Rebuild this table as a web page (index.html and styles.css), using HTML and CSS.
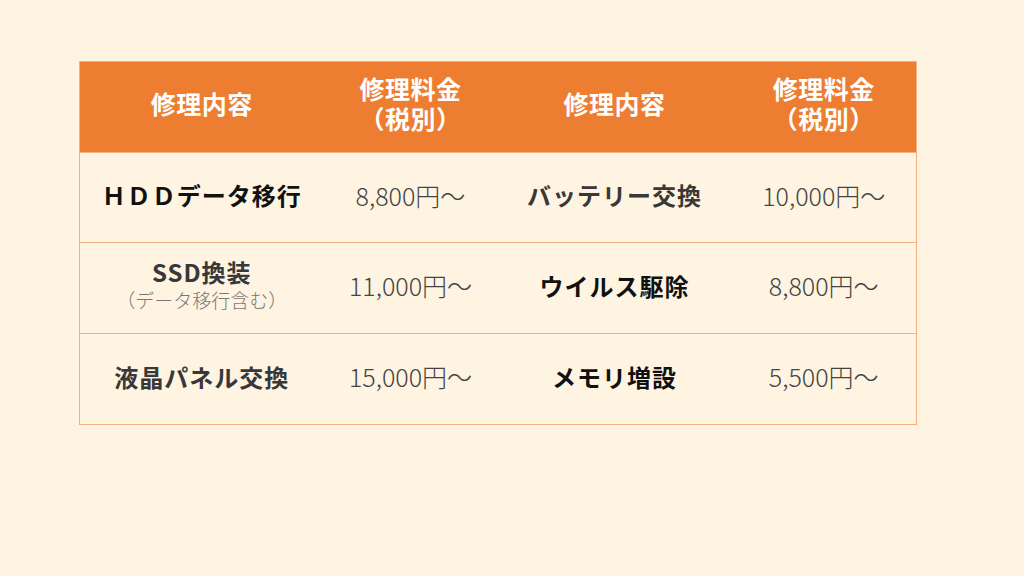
FILE: index.html
```html
<!DOCTYPE html>
<html lang="ja">
<head>
<meta charset="utf-8">
<title>修理料金表</title>
<link rel="stylesheet" href="styles.css">
</head>
<body>
<main class="page">
  <table class="price-table">
    <colgroup>
      <col class="c1"><col class="c2"><col class="c3"><col class="c4">
    </colgroup>
    <thead>
      <tr>
        <th>修理内容</th>
        <th>修理料金<br>（税別）</th>
        <th>修理内容</th>
        <th>修理料金<br>（税別）</th>
      </tr>
    </thead>
    <tbody>
      <tr>
        <td class="item dark">ＨＤＤデータ移行</td>
        <td class="price">8,800円～</td>
        <td class="item">バッテリー交換</td>
        <td class="price">10,000円～</td>
      </tr>
      <tr>
        <td class="item"><span class="main">SSD換装</span><span class="sub">（データ移行含む）</span></td>
        <td class="price">11,000円～</td>
        <td class="item dark">ウイルス駆除</td>
        <td class="price">8,800円～</td>
      </tr>
      <tr>
        <td class="item">液晶パネル交換</td>
        <td class="price">15,000円～</td>
        <td class="item dark">メモリ増設</td>
        <td class="price">5,500円～</td>
      </tr>
    </tbody>
  </table>
</main>
</body>
</html>
```
FILE: styles.css
```css
html, body {
  margin: 0;
  padding: 0;
  background: #fef4e1;
}
body {
  font-family: "Noto Sans CJK JP", "Noto Sans", sans-serif;
  width: 1024px;
  height: 576px;
  overflow: hidden;
}
.page {
  padding: 61px 0 0 79px;
}
.price-table {
  width: 837px;
  border-collapse: collapse;
  table-layout: fixed;
}
.c1 { width: 244px; }
.c2 { width: 174px; }
.c3 { width: 234px; }
.c4 { width: 185px; }
.price-table th {
  background: #ed7d31;
  color: #fff;
  font-weight: bold;
  font-size: 25px;
  letter-spacing: 0.5px;
  line-height: 30px;
  height: 82px;
  padding: 0 0 8px;
  text-align: center;
  vertical-align: middle;
  border-top: 1px solid #f4b183;
  border-bottom: 1px solid #f4b183;
}
.price-table th:first-child {
  border-left: 1px solid #f4b183;
}
.price-table th:last-child {
  border-right: 1px solid #f4b183;
}
.price-table td {
  height: 84px;
  padding: 0 0 6px;
  text-align: center;
  vertical-align: middle;
  border-bottom: 1px solid #f4b183;
}
.price-table tbody tr:first-child td {
  height: 83px;
}
.price-table td:first-child {
  border-left: 1px solid #f4b183;
}
.price-table td:last-child {
  border-right: 1px solid #f4b183;
}
.item {
  font-size: 24px;
  font-weight: bold;
  color: #383838;
  letter-spacing: 1px;
}
.item.dark {
  color: #111;
}
.price {
  font-size: 25px;
  font-weight: 300;
  color: #444;
}
.main {
  display: block;
  line-height: 30px;
}
.sub {
  display: block;
  font-size: 19px;
  font-weight: 300;
  color: #777;
  letter-spacing: 0;
  line-height: 26px;
}
```
